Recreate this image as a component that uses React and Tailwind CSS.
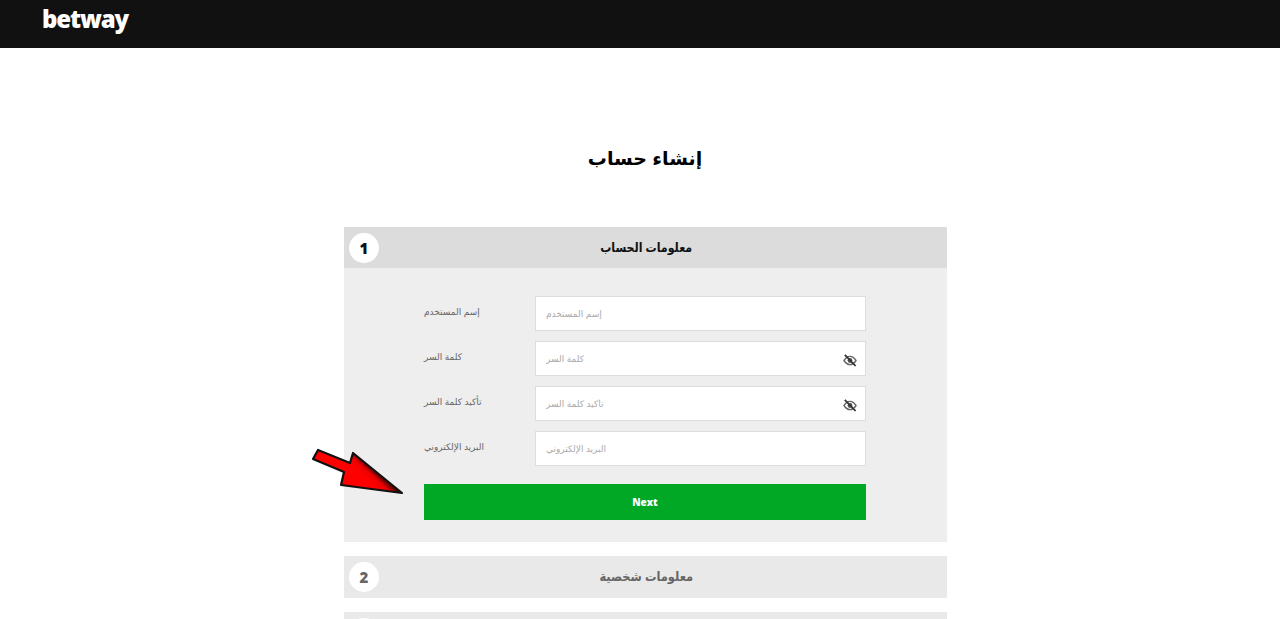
import React from "react";

const arabic = "font-['Liberation_Sans','DejaVu_Sans','Noto_Sans',sans-serif]";

function EyeSlash() {
  return (
    <svg className="absolute right-[9px] top-[13px]" width="14" height="13" viewBox="0 0 14 13" fill="none">
      <path d="M1 6.5C3 3.4 5 2.4 7 2.4S11 3.4 13 6.5C11 9.6 9 10.6 7 10.6S3 9.6 1 6.5Z" stroke="#666" strokeWidth="1.4" />
      <circle cx="7" cy="6.5" r="2.4" fill="#555" />
      <path d="M1.8 .8L12.6 12" stroke="#333" strokeWidth="1.8" />
    </svg>
  );
}

function Field({ label, password }) {
  return (
    <div className="flex items-center h-[35px]">
      <label dir="rtl" className={`w-[111px] text-left text-[9px] leading-none text-[#666] pb-[3px] ${arabic}`}>{label}</label>
      <div className="relative w-[331px] h-full">
        <input
          dir="rtl"
          readOnly
          placeholder={label}
          className={`w-full h-full bg-white border border-[#dddddd] px-[10px] text-left text-[9px] placeholder:text-[#aaaaaa] outline-none ${arabic}`}
        />
        {password && <EyeSlash />}
      </div>
    </div>
  );
}

function Head({ n, title, active }) {
  return (
    <div className={`relative flex items-center justify-center ${active ? "h-[41px] bg-[#dcdcdc] text-[#111]" : "h-[42px] bg-[#e9e9e9] text-[#666]"}`}>
      <div className={`absolute left-[5px] top-[6px] flex items-center justify-center w-[30px] h-[30px] rounded-full bg-white text-[15px] font-black font-['Open_Sans',sans-serif] ${active ? "text-[#111]" : "text-[#666]"}`}>
        {n}
      </div>
      {title && <h2 dir="rtl" className={`ml-[1px] text-[13px] font-bold ${active ? "scale-x-[0.85]" : "scale-x-[0.88]"} ${arabic}`}>{title}</h2>}
    </div>
  );
}

export default function App() {
  return (
    <div className="relative h-screen overflow-hidden bg-white">
      <header className="h-12 bg-[#111111] pl-[42px]">
        <span className="block pt-[3px] text-white text-[24px] leading-[32px] font-extrabold tracking-[-1.1px] font-['Open_Sans',sans-serif]">betway</span>
      </header>

      <h1 dir="rtl" className={`mt-[98px] h-[26px] ml-[10px] text-center text-[19px] leading-[26px] font-bold text-black ${arabic}`}>إنشاء حساب</h1>

      <main className="mt-[55px] w-[603px] ml-[344px] flex flex-col">
        <section>
          <Head n="1" title="معلومات الحساب" active />
          <div className="h-[274px] bg-[#eeeeee] pl-[80px] pt-[28px]">
            <div className="flex flex-col gap-[10px]">
              <Field label="إسم المستخدم" />
              <Field label="كلمة السر" password />
              <Field label="تأكيد كلمة السر" password />
              <Field label="البريد الإلكتروني" />
            </div>
            <button className="mt-[18px] w-[442px] h-[36px] bg-[#00a826] text-white text-[10px] font-extrabold font-['Open_Sans',sans-serif]">Next</button>
          </div>
        </section>
        <section className="mt-[14px]">
          <Head n="2" title="معلومات شخصية" />
        </section>
        <section className="mt-[14px]">
          <Head />
        </section>
      </main>

      <svg className="absolute left-[305px] top-[442px]" width="110" height="60" viewBox="305 442 110 60">
        <defs>
          <linearGradient id="arrowFill" gradientUnits="userSpaceOnUse" x1="367" y1="480" x2="378" y2="468">
            <stop offset="0" stopColor="#ff0000" />
            <stop offset="0.4" stopColor="#ee0000" />
            <stop offset="0.85" stopColor="#300000" />
          </linearGradient>
        </defs>
        <path
          d="M318 450 L350 463 L353 453 L402 493 L341 485 L344 472 L313 459 Z"
          fill="url(#arrowFill)"
          stroke="#111"
          strokeWidth="2.2"
          strokeLinejoin="round"
        />
      </svg>
    </div>
  );
}
